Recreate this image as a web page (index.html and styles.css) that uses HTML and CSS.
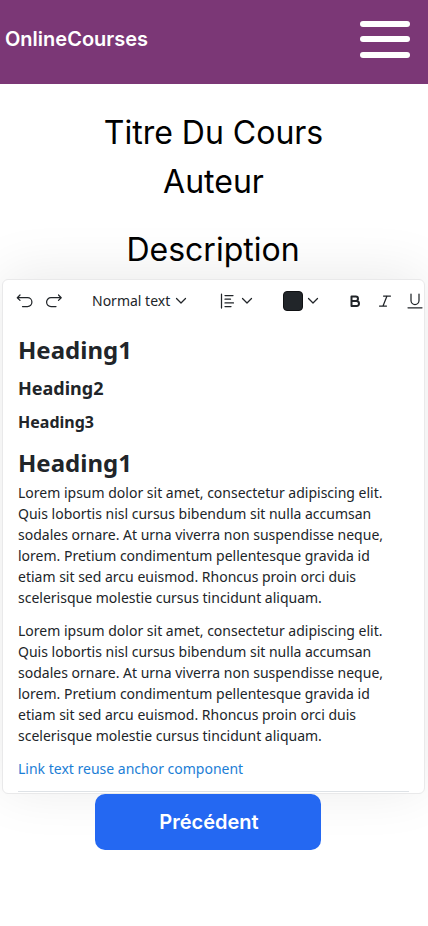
FILE: index.html
```html
<!DOCTYPE html>
<html lang="fr">
<head>
<meta charset="utf-8">
<title>OnlineCourses</title>
<link rel="stylesheet" href="styles.css">
</head>
<body>
<header class="navbar">
  <span class="brand">OnlineCourses</span>
  <div class="menu"><span></span><span></span><span></span></div>
</header>
<main>
  <h1 class="title">Titre Du Cours</h1>
  <p class="title">Auteur</p>
  <h2 class="title description">Description</h2>
  <section class="editor">
    <div class="toolbar">
      <svg class="undo" width="18" height="18" viewBox="0 0 18 18"><path d="M4 3 1.300 5.700 4 8.400M1.300 5.700h10.200a4.400 4.400 0 0 1 0 8.800H6.500"/></svg>
      <svg class="redo" width="18" height="18" viewBox="0 0 18 18"><path d="M13.500 3l2.700 2.700-2.700 2.700M16.200 5.700H6a4.400 4.400 0 0 0 0 8.800h5"/></svg>
      <span class="style-name">Normal text</span>
      <svg class="chevron" width="12" height="12" viewBox="0 0 12 12"><path d="m1.500 3.500 4.500 4.500 4.500-4.500"/></svg>
      <svg class="align" width="16" height="16" viewBox="0 0 16 16"><path d="M2.500 1v14M6 2.500h8M6 6.200h5.500M6 9.900h8.500M6 13.600h6"/></svg>
      <svg class="chevron" width="12" height="12" viewBox="0 0 12 12"><path d="m1.500 3.500 4.500 4.500 4.500-4.500"/></svg>
      <span class="swatch"></span>
      <svg class="chevron" width="12" height="12" viewBox="0 0 12 12"><path d="m1.500 3.500 4.500 4.500 4.500-4.500"/></svg>
      <svg class="bold" width="12" height="14" viewBox="0 0 12 14"><path d="M2.500 2.500h4.300a2.200 2.200 0 0 1 0 4.400H2.500zM2.500 6.900h5a2.500 2.500 0 0 1 0 5H2.500z"/></svg>
      <svg class="italic" width="14" height="14" viewBox="0 0 14 14"><path d="M5.500 2h7M1.500 12h7M9 2l-4 10"/></svg>
      <svg class="underline" width="16" height="18" viewBox="0 0 16 18"><path d="M4 2v6.500a4 4 0 0 0 8 0V2M1 15.800h14"/></svg>
    </div>
    <div class="content">
      <h3 class="h-large">Heading1</h3>
      <h4 class="h-medium">Heading2</h4>
      <h5 class="h-small">Heading3</h5>
      <h3 class="h-large second">Heading1</h3>
      <p>Lorem ipsum dolor sit amet, consectetur adipiscing elit. Quis lobortis nisl cursus bibendum sit nulla accumsan sodales ornare. At urna viverra non suspendisse neque, lorem. Pretium condimentum pellentesque gravida id etiam sit sed arcu euismod. Rhoncus proin orci duis scelerisque molestie cursus tincidunt aliquam.</p>
      <p>Lorem ipsum dolor sit amet, consectetur adipiscing elit. Quis lobortis nisl cursus bibendum sit nulla accumsan sodales ornare. At urna viverra non suspendisse neque, lorem. Pretium condimentum pellentesque gravida id etiam sit sed arcu euismod. Rhoncus proin orci duis scelerisque molestie cursus tincidunt aliquam.</p>
      <a class="link">Link text reuse anchor component</a>
      <hr>
    </div>
  </section>
  <button class="previous">Précédent</button>
</main>
</body>
</html>
```
FILE: styles.css
```css
* { box-sizing: border-box; margin: 0; }
body { width: 428px; height: 926px; overflow: hidden; background: #fff; font-family: Inter, sans-serif; }
.navbar { height: 84px; background: #7b3776; display: flex; justify-content: space-between; padding: 21px 18px 0 5px; }
.brand { color: #fff; font-size: 20px; font-weight: 600; line-height: 36px; }
.menu { width: 50px; height: 37px; display: flex; flex-direction: column; justify-content: space-between; }
.menu span { height: 6px; border-radius: 3px; background: #fff; }
.menu span:nth-child(2) { margin-top: -1px; }
main { padding-top: 24px; }
.title { font-size: 32px; font-weight: 400; line-height: 49px; text-align: center; color: #000; padding-right: 1px; }
.description { margin-top: 19px; padding-right: 2px; }
.editor { width: 423px; height: 515px; margin: 5px 0 0 2px; border: 1px solid #e9e9ea; border-radius: 6px; background: #fff; box-shadow: 0 -5px 56px rgba(0,0,0,.085); overflow: hidden; font-family: "Noto Sans", sans-serif; color: #212529; }
.toolbar { height: 42px; display: flex; align-items: center; padding-left: 13px; }
.toolbar svg { flex: none; fill: none; stroke: #212529; stroke-width: 1.25; stroke-linecap: round; stroke-linejoin: round; }
.redo { margin-left: 11px; }
.style-name { margin: -2px 0 0 29px; font-size: 14px; white-space: nowrap; flex: none; }
.toolbar .chevron { margin-left: 5px; }
.toolbar .align { margin-left: 32px; }
.toolbar .align + .chevron { margin-left: 6px; }
.swatch { flex: none; width: 20px; height: 20px; margin-left: 30px; border: 1px solid #101113; border-radius: 4px; background: #212529; }
.toolbar .swatch + .chevron { margin-left: 4px; }
.toolbar .bold { margin-left: 30px; stroke-width: 2; }
.italic { margin-left: 17px; }
.underline { margin-left: 15px; }
.content { padding: 11px 15px 0; font-size: 14px; line-height: 21px; }
.h-large { font-size: 24px; line-height: 34px; }
.h-medium { font-size: 18px; line-height: 25px; margin-top: 9px; }
.h-small { font-size: 16px; line-height: 22px; margin-top: 10px; }
.second { margin-top: 13px; margin-bottom: 2px; }
.content p { margin-bottom: 12px; }
.link { display: block; color: #1c7ed6; }
hr { border: 0; height: 1px; margin-top: 12px; background: #dee2e6; }
.previous { position: relative; display: block; width: 226px; height: 56px; margin-left: 95px; padding-left: 8px; border: 0; border-radius: 10px; background: #2468f2; color: #fff; font: 600 20px Inter, sans-serif; }
```
